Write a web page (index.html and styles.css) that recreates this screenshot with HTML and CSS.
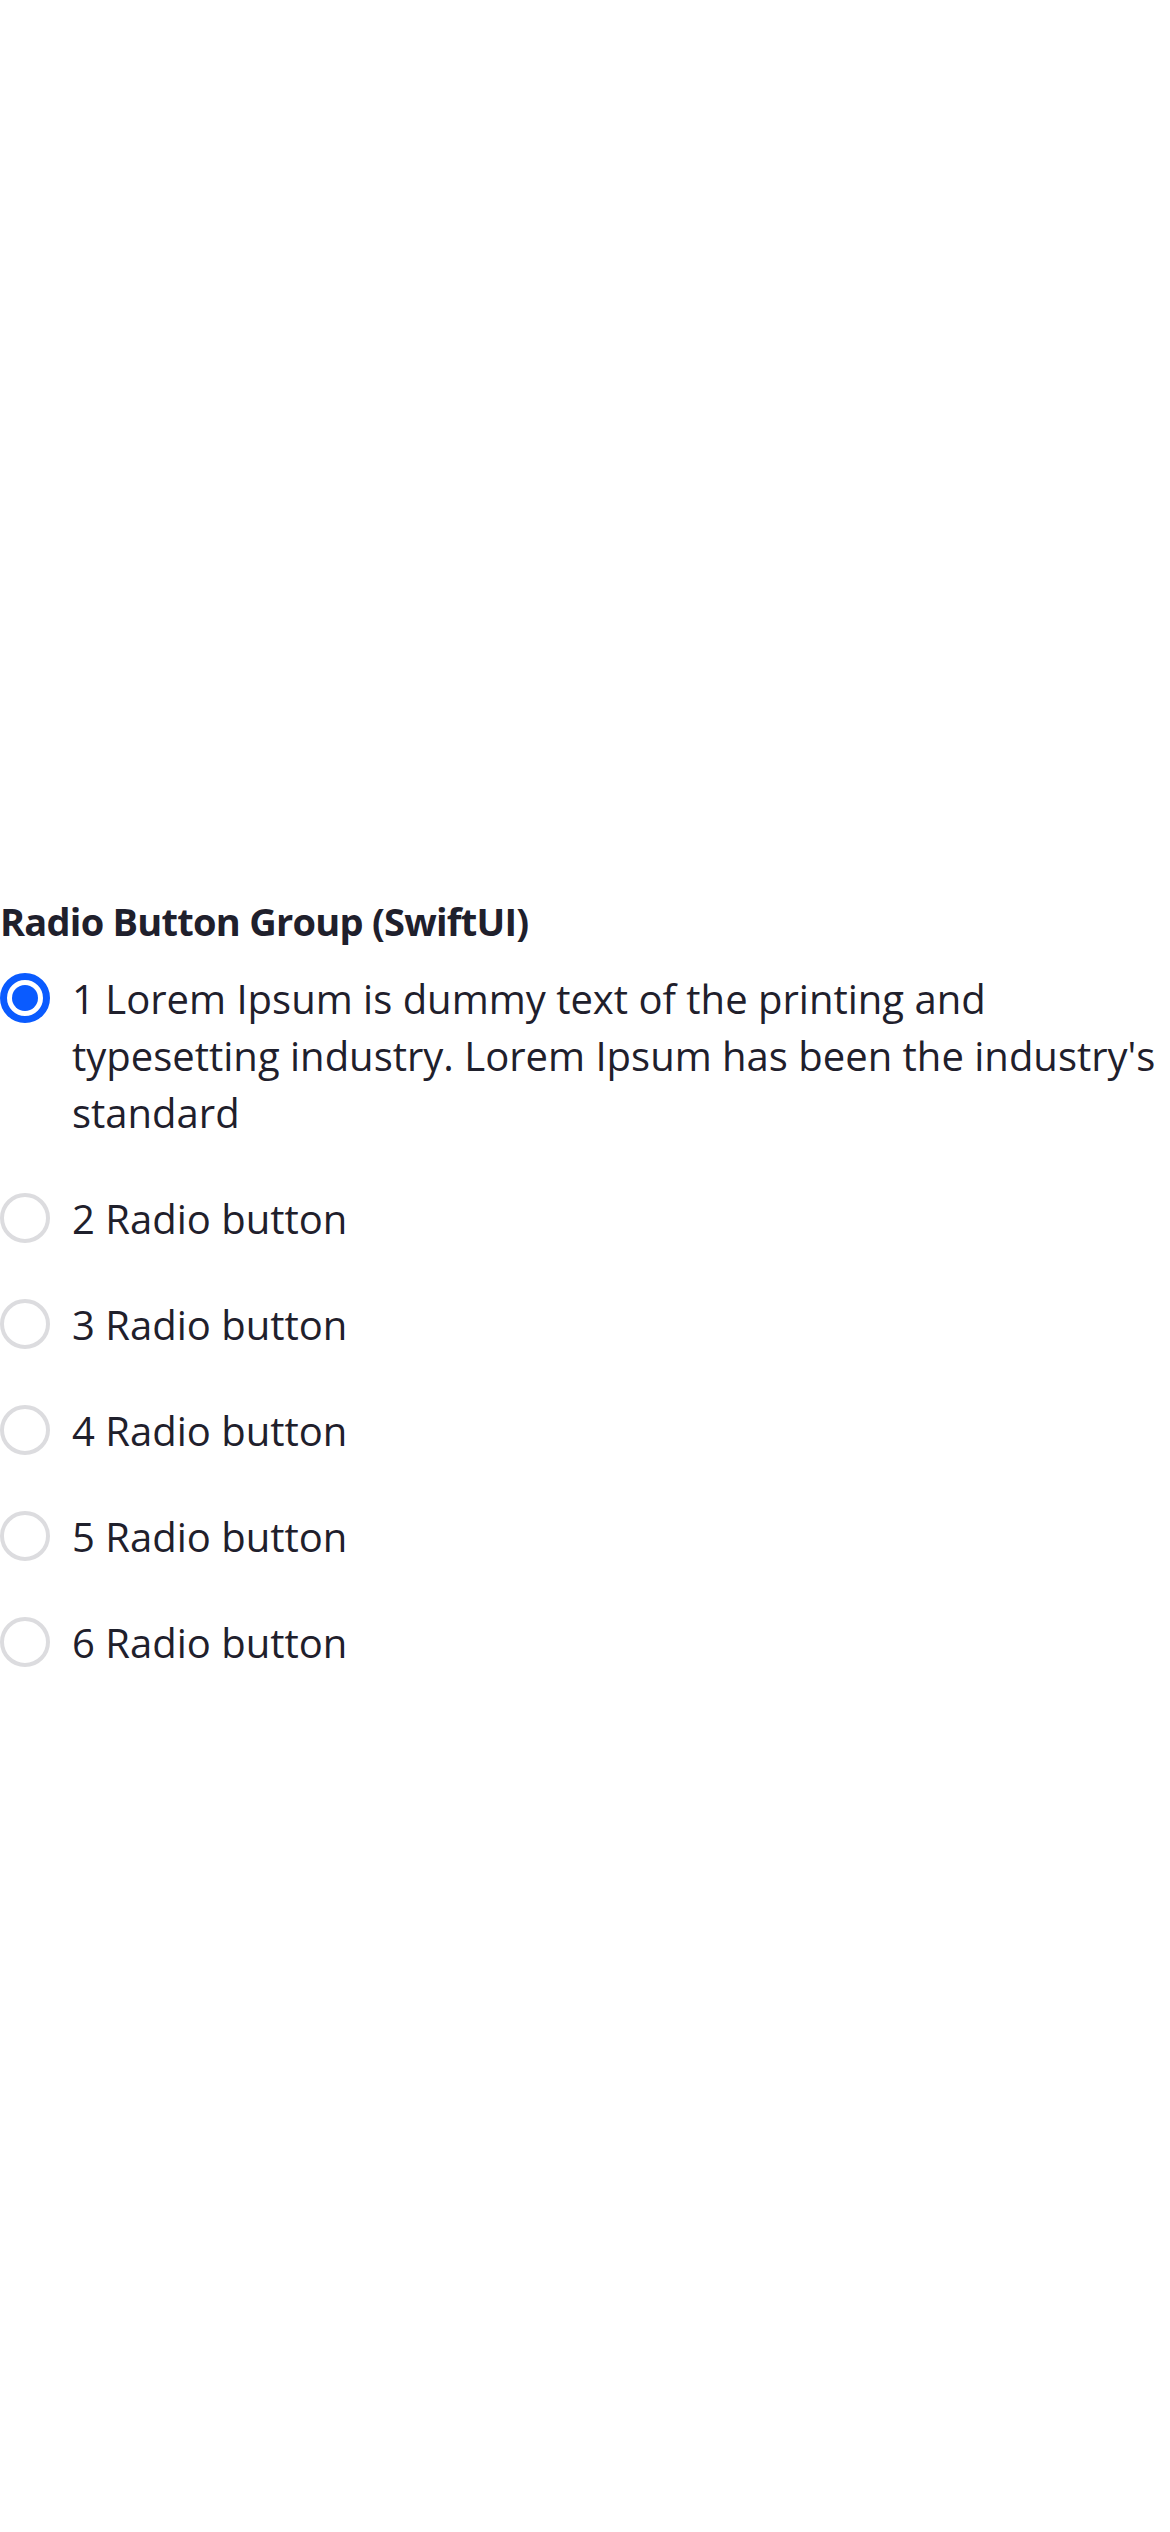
FILE: index.html
```html
<!DOCTYPE html>
<html lang="en">
<head>
<meta charset="utf-8">
<title>Radio Button Group (SwiftUI)</title>
<link rel="stylesheet" href="styles.css">
</head>
<body>
<main class="screen">
  <section class="group">
    <h1 class="group-title">Radio Button Group (SwiftUI)</h1>
    <ul class="radio-list">
      <li class="radio-row">
        <span class="radio radio--on"><span class="radio-dot"></span></span>
        <span class="radio-label">1 Lorem Ipsum is dummy text of the printing and typesetting industry. Lorem Ipsum has been the industry's standard</span>
      </li>
      <li class="radio-row">
        <span class="radio"></span>
        <span class="radio-label">2 Radio button</span>
      </li>
      <li class="radio-row">
        <span class="radio"></span>
        <span class="radio-label">3 Radio button</span>
      </li>
      <li class="radio-row">
        <span class="radio"></span>
        <span class="radio-label">4 Radio button</span>
      </li>
      <li class="radio-row">
        <span class="radio"></span>
        <span class="radio-label">5 Radio button</span>
      </li>
      <li class="radio-row">
        <span class="radio"></span>
        <span class="radio-label">6 Radio button</span>
      </li>
    </ul>
  </section>
</main>
</body>
</html>
```
FILE: styles.css
```css
* { box-sizing: border-box; }

html, body {
  margin: 0;
  padding: 0;
  background: #ffffff;
}

body {
  font-family: "Open Sans", "Noto Sans", "Liberation Sans", sans-serif;
  color: #1f202c;
}

.screen {
  width: 1170px;
  min-height: 2532px;
  padding-top: 897px;
}

.group {
  display: flex;
  flex-direction: column;
  gap: 25px;
}

.group-title {
  margin: 0;
  font-size: 38px;
  font-weight: 700;
  letter-spacing: -0.75px;
  line-height: 48px;
  color: #1f202c;
}

.radio-list {
  list-style: none;
  margin: 0;
  padding: 0;
  display: flex;
  flex-direction: column;
  gap: 49px;
}

.radio-row {
  display: flex;
  align-items: flex-start;
  gap: 22px;
}

.radio {
  flex: 0 0 50px;
  width: 50px;
  height: 50px;
  margin-top: 3px;
  border-radius: 50%;
  border: 4px solid #dcdcdf;
  display: flex;
  align-items: center;
  justify-content: center;
}

.radio--on {
  border: 7px solid #0a5bff;
}

.radio-dot {
  width: 26px;
  height: 26px;
  border-radius: 50%;
  background: #0a5bff;
}

.radio-label {
  flex: 1 1 auto;
  font-size: 40px;
  line-height: 57px;
  font-weight: 400;
  color: #1f202c;
}
```
